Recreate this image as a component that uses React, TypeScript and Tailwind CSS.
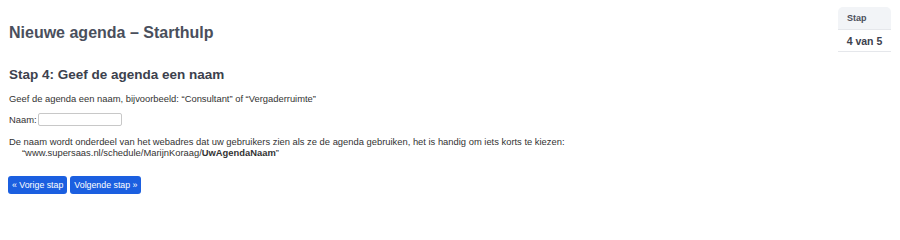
export default function App() {
  return (
    <div className="relative w-[900px] h-[209px] bg-white text-[#333] font-['Liberation_Sans',Arial,sans-serif]">
      <div className="flex items-start">
        <div className="flex-1 pl-[9px] pt-[23px]">
          <h1 className="text-[16px] leading-[20px] font-bold text-[#4a4f5c]">Nieuwe agenda – Starthulp</h1>
          <h2 className="mt-[23px] text-[13.5px] leading-[18px] font-bold text-[#3c414d]">Stap 4: Geef de agenda een naam</h2>
          <p className="mt-[9px] text-[9.4px] leading-[12px]">Geef de agenda een naam, bijvoorbeeld: “Consultant” of “Vergaderruimte”</p>
          <div className="mt-[8px] flex items-center gap-[1px] text-[9.4px] leading-[12px]">
            <span>Naam:</span>
            <input className="w-[84px] h-[13px] border border-[#c8c8c8] rounded-[2px] bg-white" />
          </div>
          <p className="mt-[10px] text-[9.4px] leading-[11px]">
            De naam wordt onderdeel van het webadres dat uw gebruikers zien als ze de agenda gebruiken, het is handig om iets korts te kiezen:
          </p>
          <p className="pl-[13px] text-[9.4px] leading-[11px]">
            “www.supersaas.nl/schedule/MarijnKoraag/<b>UwAgendaNaam</b>”
          </p>
          <div className="mt-[18px] -ml-[1px] flex gap-[3px]">
            <button className="h-[18px] px-[4px] rounded-[3px] bg-[#1b5fe0] text-white text-[8.8px] leading-[18px]">« Vorige stap</button>
            <button className="h-[18px] px-[4px] rounded-[3px] bg-[#1b5fe0] text-white text-[8.8px] leading-[18px]">Volgende stap »</button>
          </div>
        </div>
        <div className="mr-[9px] mt-[7px] w-[53px]">
          <div className="h-[23px] bg-[#f2f4f7] rounded-t-[5px] border-b border-[#e5e7eb] pl-[9px] text-[9px] leading-[23px] font-bold text-[#4a4f5c]">Stap</div>
          <div className="h-[22px] border-b border-[#e5e7eb] text-center text-[10.5px] leading-[22px] font-bold text-[#3c414d]">4 van 5</div>
        </div>
      </div>
    </div>
  )
}
